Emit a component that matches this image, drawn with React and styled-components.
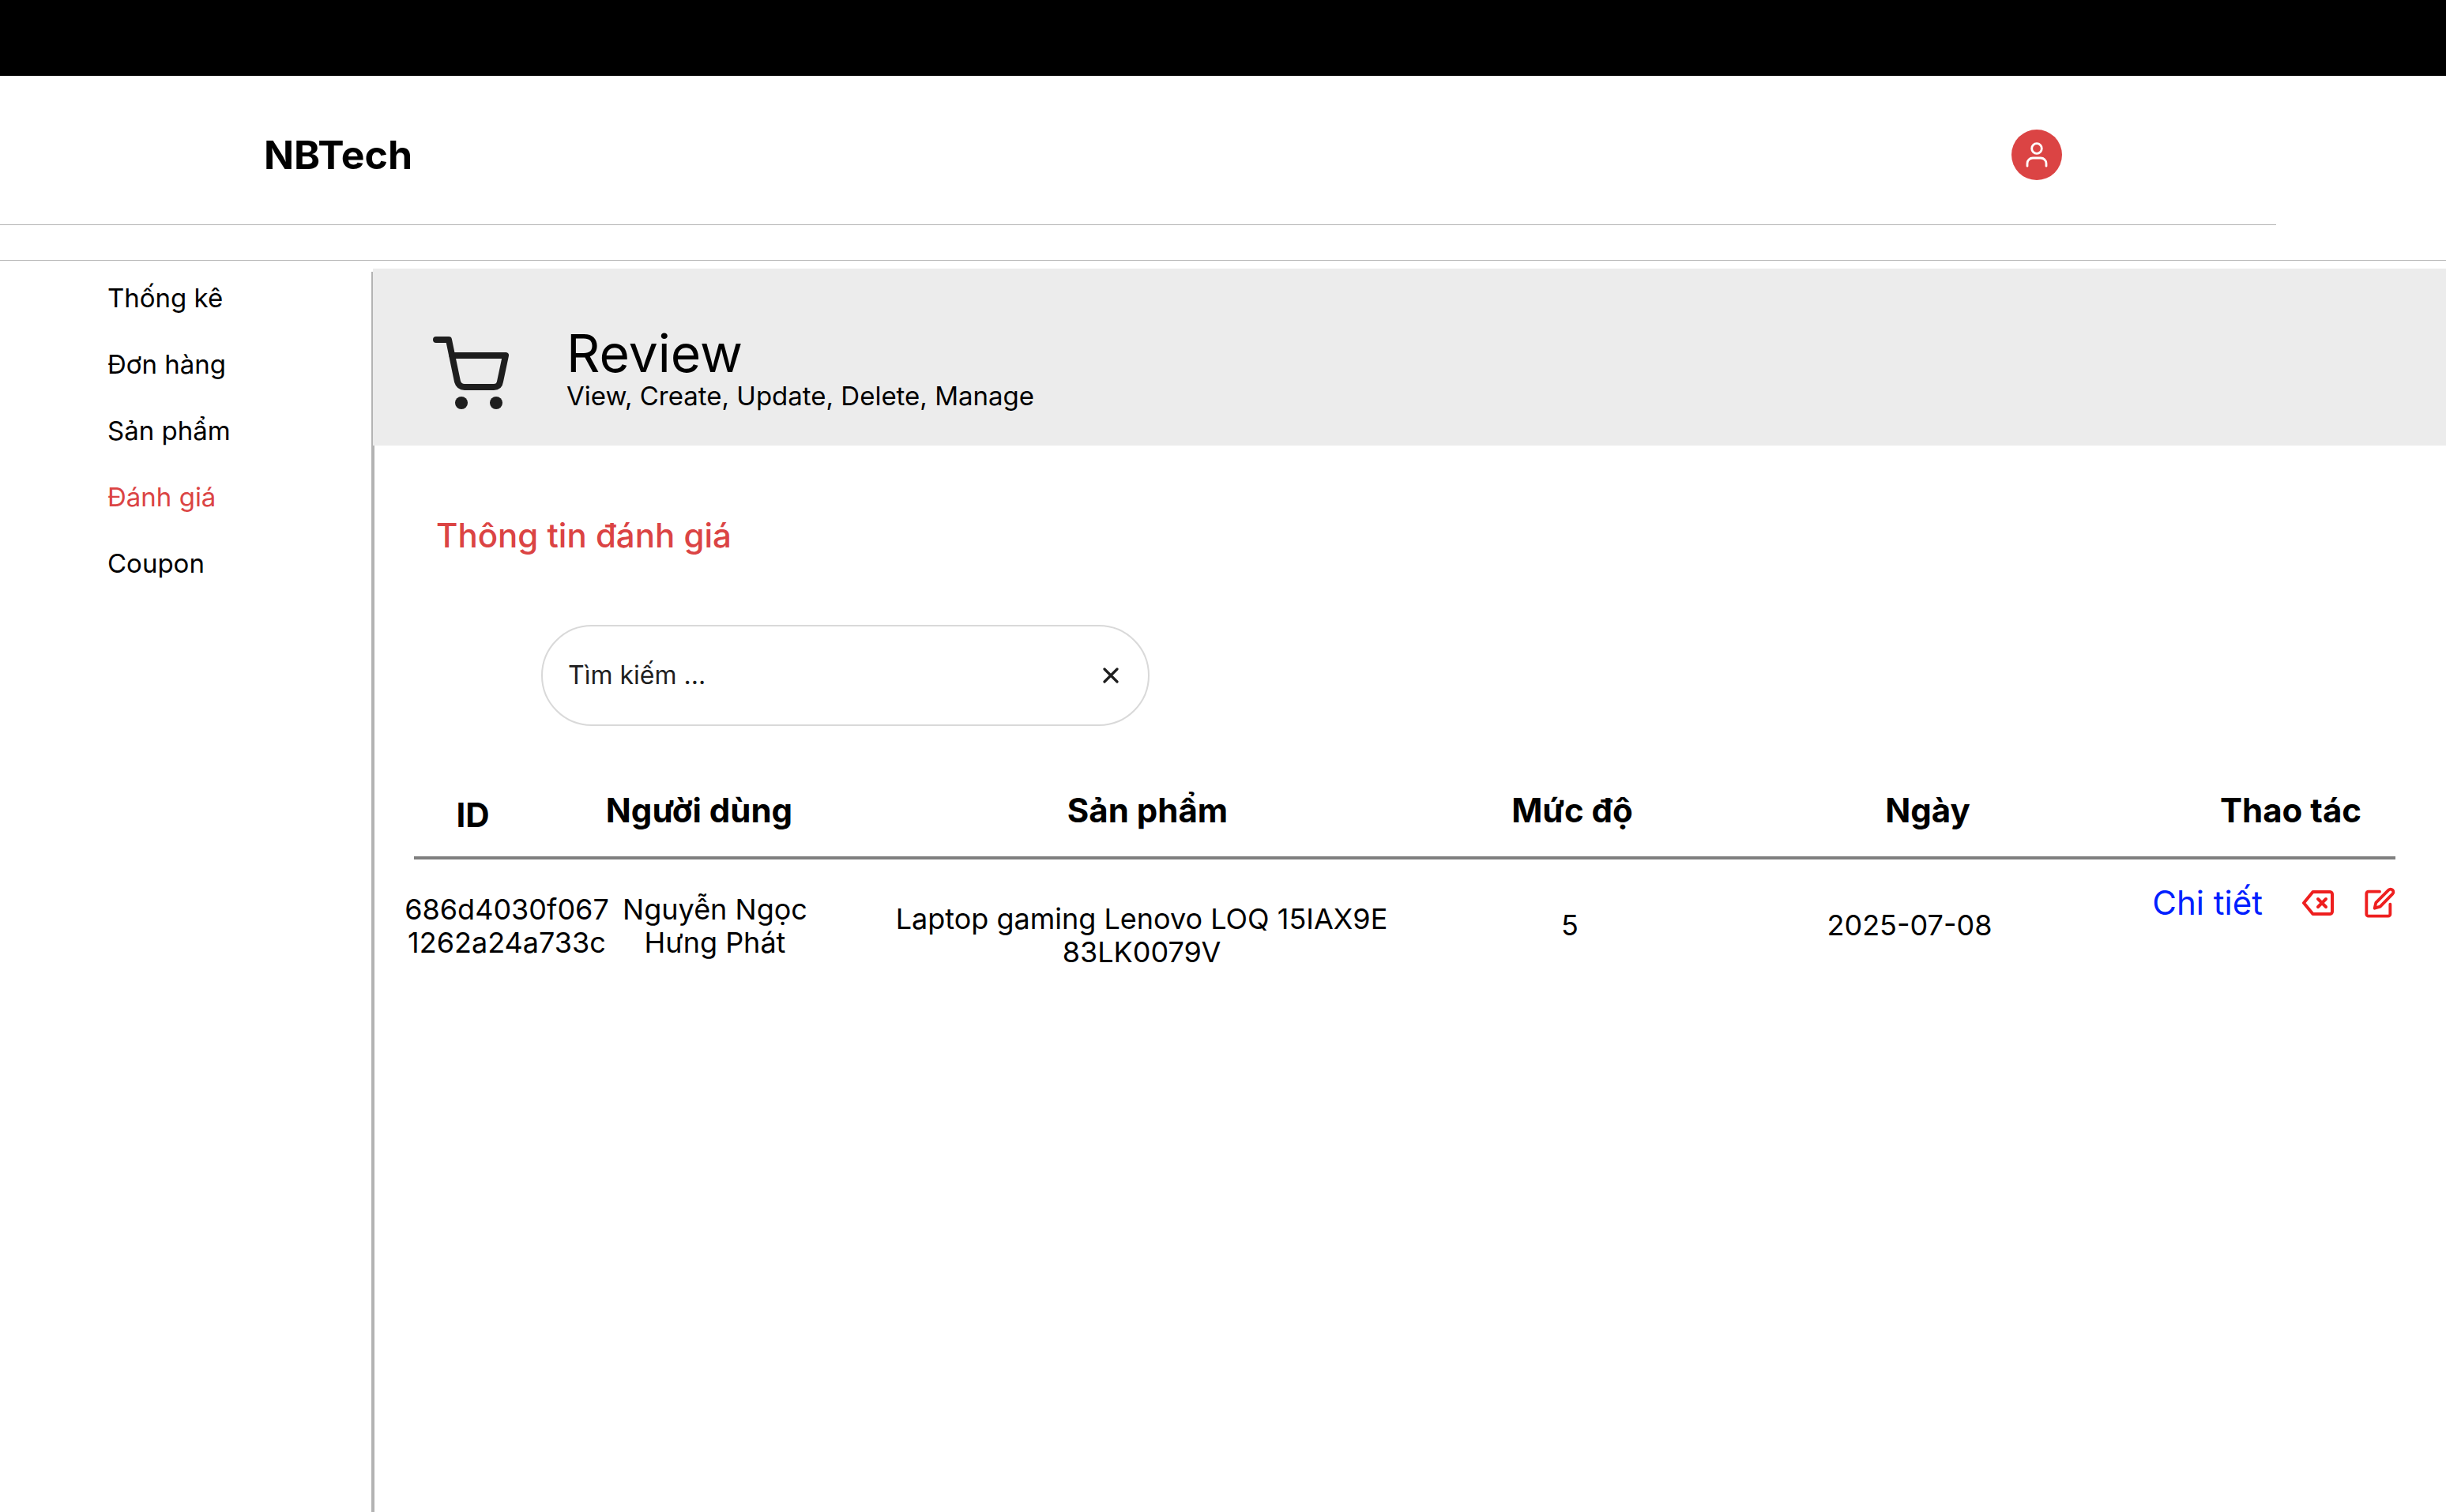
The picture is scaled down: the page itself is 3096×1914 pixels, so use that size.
import React, { useState } from "react";
import styled, { createGlobalStyle } from "styled-components";

const GlobalStyle = createGlobalStyle`
  *, *::before, *::after { box-sizing: border-box; }
  body {
    margin: 0;
    background: #fff;
    color: #000;
    font-family: Inter, "Noto Sans", sans-serif;
  }
  h1, h2, p, ul { margin: 0; padding: 0; }
  button { border: 0; padding: 0; background: none; cursor: pointer; }
  svg { display: block; }
`;

const Page = styled.div`
  display: flex;
  flex-direction: column;
  min-height: 100vh;
`;

const TopBar = styled.div`
  height: 96px;
  background: #000;
`;

const Header = styled.header`
  display: flex;
  align-items: center;
  justify-content: space-between;
  height: 188px;
  padding: 12px 486px 0 334px;
`;

const Logo = styled.a`
  color: #000;
  font-size: 50px;
  font-weight: 700;
  line-height: 60px;
  text-decoration: none;
`;

const Avatar = styled.button`
  display: grid;
  place-items: center;
  width: 64px;
  height: 64px;
  border-radius: 50%;
  background: #db4444;
`;

const Rule = styled.hr`
  width: 100%;
  height: 1px;
  margin: 0;
  border: 0;
  background: #b3b3b3;
`;

const HeaderGap = styled.div`
  height: 45px;
  padding-right: 215px;
`;

const Body = styled.div`
  display: flex;
  flex: 1;
  padding-top: 10px;
`;

const Sidebar = styled.nav`
  flex: none;
  width: 474px;
  margin-top: 4px;
  padding: 12px 0 0 136px;
  border-right: 4px solid #b3b3b3;
`;

const NavList = styled.ul`
  display: flex;
  flex-direction: column;
  gap: 42px;
  list-style: none;
`;

const NavLink = styled.a`
  display: block;
  color: ${(p) => (p.$active ? "#db4444" : "#000")};
  font-size: 33px;
  line-height: 42px;
  text-decoration: none;
`;

const Main = styled.main`
  flex: 1;
  min-width: 0;
`;

const Hero = styled.section`
  display: flex;
  gap: 73px;
  margin-left: -2px;
  padding: 70px 76px 46px;
  background: #ececec;
`;

const HeroTitle = styled.h1`
  font-size: 66px;
  font-weight: 400;
  line-height: 74px;
`;

const HeroText = styled.p`
  font-size: 33px;
  line-height: 34px;
`;

const Content = styled.section`
  padding: 90px 64px 64px 38px;
`;

const SectionTitle = styled.h2`
  padding-left: 40px;
  color: #db4444;
  font-size: 42px;
  font-weight: 500;
  line-height: 48px;
`;

const SearchBox = styled.form`
  display: flex;
  align-items: center;
  width: 770px;
  height: 128px;
  margin: 89px 0 83px 173px;
  padding: 0 37px 0 32px;
  border: 2px solid #d9d9d9;
  border-radius: 64px;
`;

const SearchInput = styled.input`
  flex: 1;
  min-width: 0;
  padding: 0;
  border: 0;
  outline: 0;
  background: transparent;
  color: #1e1e1e;
  font: 400 32px/40px Inter, "Noto Sans", sans-serif;
  &::placeholder { color: #1e1e1e; opacity: 1; }
`;

const Table = styled.table`
  display: block;
`;

const HeadGroup = styled.thead`
  display: block;
  margin-left: 12px;
  border-bottom: 4px solid #7f7f7f;
`;

const BodyGroup = styled.tbody`
  display: block;
`;

const HeadRow = styled.tr`
  display: grid;
  grid-template-columns: 149fr 424fr 711fr 364fr 536fr 324fr;
  padding-bottom: 28px;
`;

const BodyRow = styled.tr`
  display: grid;
  grid-template-columns: 259fr 268fr 812fr 272fr 588fr 321fr;
`;

const HeadCell = styled.th`
  min-width: 0;
  padding: ${(p) => (p.$low ? "6px" : "0")} ${(p) => (p.$end ? "43px" : "0")} 0 0;
  font-size: 42px;
  font-weight: 700;
  line-height: 48px;
  text-align: ${(p) => (p.$end ? "right" : "center")};
  white-space: nowrap;
`;

const Cell = styled.td`
  min-width: 0;
  padding: ${(p) => p.$top}px 0 0;
  font-size: 36px;
  line-height: 42px;
  text-align: center;
  white-space: nowrap;
`;

const Actions = styled.div`
  display: flex;
  align-items: center;
  justify-content: flex-end;
  gap: 38px;
`;

const DetailLink = styled.a`
  margin-right: 12px;
  color: #0020ff;
  font-size: 42px;
  line-height: 42px;
  text-decoration: none;
`;

const UserIcon = () => (
  <svg width="32" height="32" viewBox="0 0 32 32" fill="none" stroke="#fff" strokeWidth="2.8" strokeLinecap="round" aria-hidden="true">
    <circle cx="16" cy="8" r="6.3" />
    <path d="M4 30.2V27a7 7 0 0 1 7-7H21a7 7 0 0 1 7 7V30.2" />
  </svg>
);

const CartIcon = () => (
  <svg width="96" height="108" viewBox="0 0 96 108" fill="none" stroke="#1e1e1e" strokeWidth="8" strokeLinecap="round" strokeLinejoin="round" aria-hidden="true">
    <path d="M4 20H20L31 73Q33 80 40 80H77Q84 80 85 73L92 40H24" />
    <circle cx="36" cy="100" r="8" fill="#1e1e1e" stroke="none" />
    <circle cx="80" cy="100" r="8" fill="#1e1e1e" stroke="none" />
  </svg>
);

const CloseIcon = () => (
  <svg width="20" height="20" viewBox="0 0 20 20" fill="none" stroke="#1e1e1e" strokeWidth="3.2" strokeLinecap="round" aria-hidden="true">
    <path d="M2 2L18 18M18 2L2 18" />
  </svg>
);

const DeleteIcon = () => (
  <svg width="40" height="40" viewBox="0 0 40 40" fill="none" stroke="#ee1f1f" strokeWidth="4" strokeLinecap="round" strokeLinejoin="round" aria-hidden="true">
    <path d="M13.5 6H35.2A3 3 0 0 1 38 9V31A3 3 0 0 1 35.2 34H13.5L2 20Z" />
    <path d="M20 15L30 25M30 15L20 25" />
  </svg>
);

const EditIcon = () => (
  <svg width="40" height="40" viewBox="0 0 24 24" fill="none" stroke="#ee1f1f" strokeWidth="2.3" strokeLinecap="round" strokeLinejoin="round" aria-hidden="true">
    <path d="M12 3.4H3.5a1.5 1.5 0 0 0-1.5 1.5v15.6a1.5 1.5 0 0 0 1.5 1.5h15a1.5 1.5 0 0 0 1.5-1.5v-7.5" />
    <path d="M18.8 2.2a2.12 2.12 0 0 1 3 3L12.4 14.8 8.2 16l1-4.2z" />
  </svg>
);

const navItems = ["Thống kê", "Đơn hàng", "Sản phẩm", "Đánh giá", "Coupon"];

export default function App() {
  const [query, setQuery] = useState("");

  return (
    <Page>
      <GlobalStyle />
      <TopBar />
      <Header>
        <Logo href="#">NBTech</Logo>
        <Avatar type="button" aria-label="Tài khoản">
          <UserIcon />
        </Avatar>
      </Header>
      <HeaderGap>
        <Rule />
      </HeaderGap>
      <Rule />
      <Body>
        <Sidebar>
          <NavList>
            {navItems.map((item) => (
              <li key={item}>
                <NavLink href="#" $active={item === "Đánh giá"}>{item}</NavLink>
              </li>
            ))}
          </NavList>
        </Sidebar>
        <Main>
          <Hero>
            <CartIcon />
            <div>
              <HeroTitle>Review</HeroTitle>
              <HeroText>View, Create, Update, Delete, Manage</HeroText>
            </div>
          </Hero>
          <Content>
            <SectionTitle>Thông tin đánh giá</SectionTitle>
            <SearchBox onSubmit={(e) => e.preventDefault()}>
              <SearchInput
                type="text"
                aria-label="Tìm kiếm"
                placeholder="Tìm kiếm ..."
                value={query}
                onChange={(e) => setQuery(e.target.value)}
              />
              <button type="button" aria-label="Xóa" onClick={() => setQuery("")}>
                <CloseIcon />
              </button>
            </SearchBox>
            <Table>
              <HeadGroup>
                <HeadRow>
                  <HeadCell $low>ID</HeadCell>
                  <HeadCell>Người dùng</HeadCell>
                  <HeadCell>Sản phẩm</HeadCell>
                  <HeadCell>Mức độ</HeadCell>
                  <HeadCell>Ngày</HeadCell>
                  <HeadCell $end>Thao tác</HeadCell>
                </HeadRow>
              </HeadGroup>
              <BodyGroup>
                <BodyRow>
                  <Cell $top={42}>686d4030f067<br />1262a24a733c</Cell>
                  <Cell $top={42}>Nguyễn Ngọc<br />Hưng Phát</Cell>
                  <Cell $top={54}>Laptop gaming Lenovo LOQ 15IAX9E<br />83LK0079V</Cell>
                  <Cell $top={62}>5</Cell>
                  <Cell $top={62}>2025-07-08</Cell>
                  <Cell $top={34}>
                    <Actions>
                      <DetailLink href="#">Chi tiết</DetailLink>
                      <button type="button" aria-label="Xóa đánh giá"><DeleteIcon /></button>
                      <button type="button" aria-label="Sửa đánh giá"><EditIcon /></button>
                    </Actions>
                  </Cell>
                </BodyRow>
              </BodyGroup>
            </Table>
          </Content>
        </Main>
      </Body>
    </Page>
  );
}
